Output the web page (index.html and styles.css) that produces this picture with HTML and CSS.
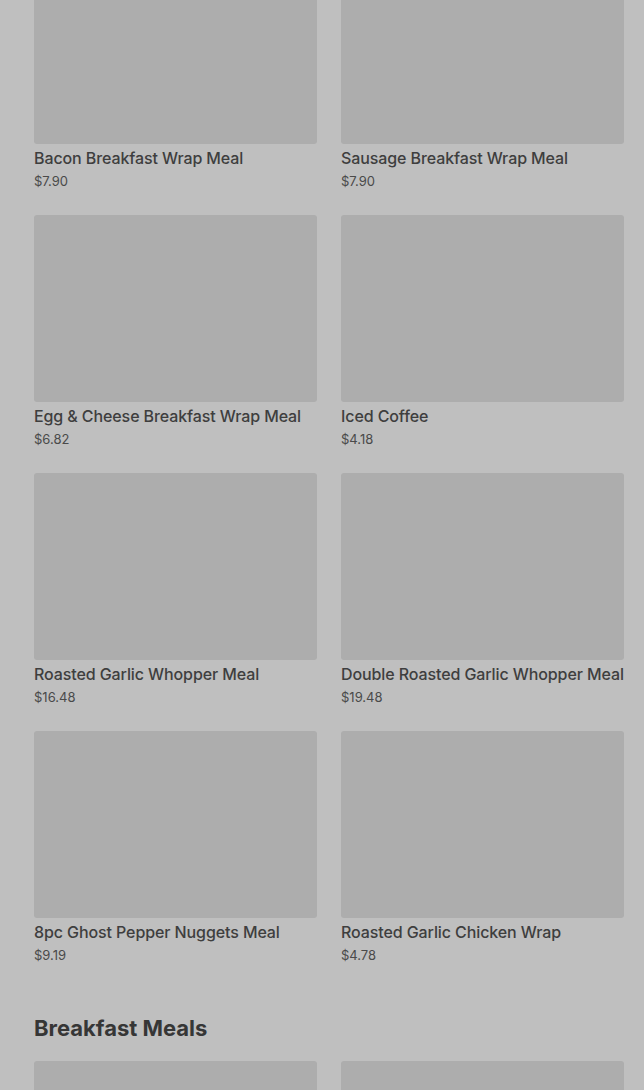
FILE: index.html
```html
<!DOCTYPE html>
<html>
<head>
<meta charset="utf-8">
<link rel="stylesheet" href="styles.css">
</head>
<body>
<div class="page">
  <div class="grid">
    <div class="card"><div class="img"></div><div class="name">Bacon Breakfast Wrap Meal</div><div class="price">$7.90</div></div>
    <div class="card"><div class="img"></div><div class="name">Sausage Breakfast Wrap Meal</div><div class="price">$7.90</div></div>
    <div class="card"><div class="img"></div><div class="name">Egg &amp; Cheese Breakfast Wrap Meal</div><div class="price">$6.82</div></div>
    <div class="card"><div class="img"></div><div class="name">Iced Coffee</div><div class="price">$4.18</div></div>
    <div class="card"><div class="img"></div><div class="name">Roasted Garlic Whopper Meal</div><div class="price">$16.48</div></div>
    <div class="card"><div class="img"></div><div class="name">Double Roasted Garlic Whopper Meal</div><div class="price">$19.48</div></div>
    <div class="card"><div class="img"></div><div class="name">8pc Ghost Pepper Nuggets Meal</div><div class="price">$9.19</div></div>
    <div class="card"><div class="img"></div><div class="name">Roasted Garlic Chicken Wrap</div><div class="price">$4.78</div></div>
  </div>
  <h2 class="section">Breakfast Meals</h2>
  <div class="grid">
    <div class="card"><div class="img"></div></div>
    <div class="card"><div class="img"></div></div>
  </div>
</div>
</body>
</html>
```
FILE: styles.css
```css
html, body {
  margin: 0;
  padding: 0;
  background: #bfbfbf;
  overflow: hidden;
  height: 1090px;
}
body {
  font-family: Inter, "Noto Sans", sans-serif;
  color: #3d3d3d;
}
.page {
  margin-top: -43px;
  padding: 0 20px 0 34px;
}
.grid {
  display: grid;
  grid-template-columns: 283px 283px;
  column-gap: 24px;
  row-gap: 25px;
}
.img {
  height: 187px;
  background: #adadad;
  border-radius: 3px;
}
.name {
  margin-top: 4px;
  font-size: 16px;
  line-height: 20px;
  font-weight: 500;
  letter-spacing: -0.1px;
  color: #3e3e3e;
  white-space: nowrap;
}
.price {
  margin-top: 4px;
  font-size: 13px;
  line-height: 18px;
  font-weight: 400;
  color: #4a4a4a;
}
.section {
  margin: 50px 0 0 0;
  font-size: 22px;
  line-height: 28px;
  font-weight: 700;
  color: #363636;
  padding: 0;
  height: 47px;
}
```
